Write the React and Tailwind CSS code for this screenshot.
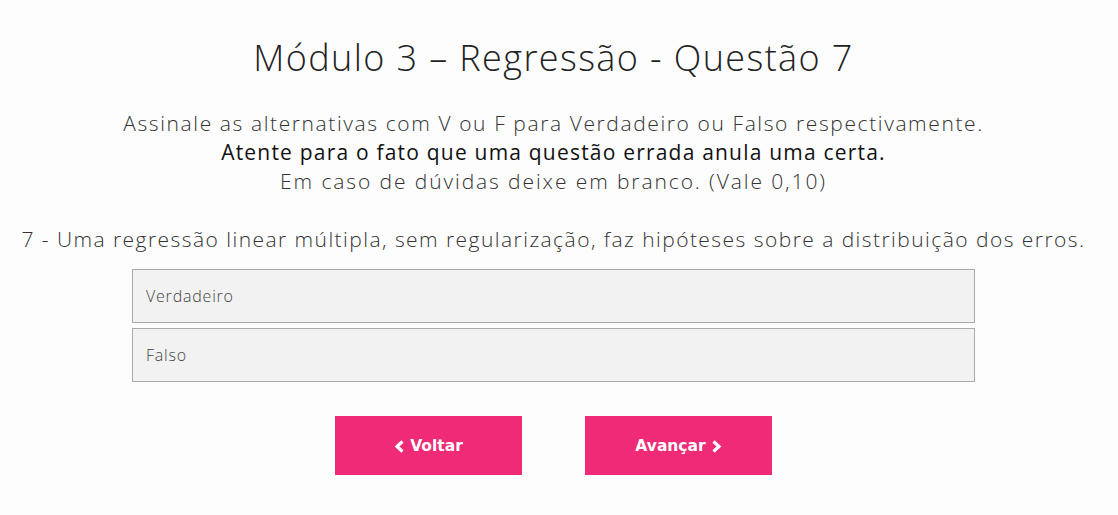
const options = ["Verdadeiro", "Falso"];

function Chevron({ dir }) {
  return (
    <svg width="11" height="13" viewBox="0 0 11 13" className="shrink-0">
      <polyline
        points={dir === "left" ? "8.5,1.5 3,6.5 8.5,11.5" : "2.5,1.5 8,6.5 2.5,11.5"}
        fill="none"
        stroke="currentColor"
        strokeWidth="3.2"
        strokeLinejoin="miter"
      />
    </svg>
  );
}

export default function App() {
  return (
    <div className="min-h-[515px] bg-[#fdfdfd] pr-[11px] font-['Open_Sans',sans-serif] text-[#333]">
      {/* Cabeçalho */}
      <h1 className="pt-[34px] text-center text-[36px] font-light leading-[48px] tracking-[1.4px] text-[#222]">
        Módulo 3 – Regressão - Questão 7
      </h1>

      {/* Instruções */}
      <div className="mt-[27px] text-center text-[21px] leading-[29px] font-light tracking-[1.6px]">
        <p>Assinale as alternativas com V ou F para Verdadeiro ou Falso respectivamente.</p>
        <p className="font-normal tracking-[1.2px] text-[#111]">Atente para o fato que uma questão errada anula uma certa.</p>
        <p className="tracking-[1.9px]">Em caso de dúvidas deixe em branco. (Vale 0,10)</p>
      </div>

      {/* Pergunta */}
      <p className="mt-[29px] text-center text-[21px] leading-[29px] font-light tracking-[1.45px]">
        7 - Uma regressão linear múltipla, sem regularização, faz hipóteses sobre a distribuição dos erros.
      </p>

      <div className="mx-auto mt-[15px] flex w-[843px] flex-col gap-[5px]">
        {options.map((o) => (
          <div
            key={o}
            className="flex h-[54px] items-center border border-[#aaa] bg-[#f2f2f2] px-[13px] text-[16px] font-light tracking-[0.8px] text-[#444]"
          >
            {o}
          </div>
        ))}
      </div>

      {/* Navegação */}
      <div className="mt-[34px] flex justify-center gap-[63px] font-['DejaVu_Sans',sans-serif]">
        <button className="flex h-[59px] w-[187px] items-center justify-center gap-[5px] bg-[#ef2a76] pt-[2px] text-[15.5px] font-bold text-white">
          <Chevron dir="left" />
          Voltar
        </button>
        <button className="flex h-[59px] w-[187px] items-center justify-center gap-[5px] bg-[#ef2a76] pt-[2px] text-[15.5px] font-bold text-white">
          Avançar
          <Chevron dir="right" />
        </button>
      </div>
    </div>
  );
}
